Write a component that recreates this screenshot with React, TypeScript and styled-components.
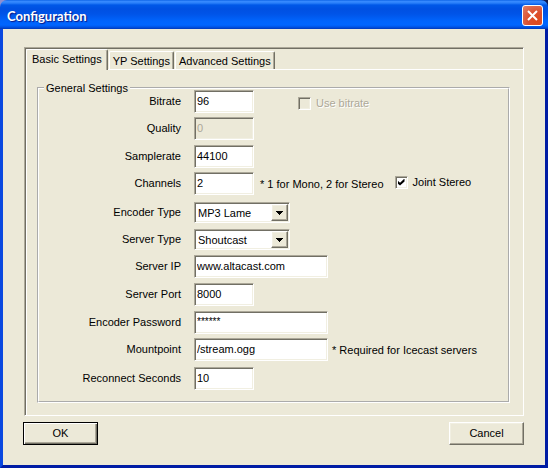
import React from "react";
import styled, { createGlobalStyle, css } from "styled-components";

const GlobalStyle = createGlobalStyle`
  * { box-sizing: border-box; }
  body {
    margin: 0;
    background: linear-gradient(90deg, #8f8fd0 50%, #101850 50%);
    color: #000;
    font: 11px/14px "Liberation Sans", Arial, sans-serif;
  }
  input, select, button { font: inherit; color: inherit; margin: 0; }
`;

const face = "#ece9d8";
const shade = "#aca899";
const dark = "#716f64";
const light = "#f1efe2";

const sunken = css`
  border: 1px solid;
  border-color: ${shade} #fff #fff ${shade};
  box-shadow: inset 1px 1px 0 ${dark}, inset -1px -1px 0 ${light};
`;

const raised = css`
  border: 1px solid;
  border-color: #fff ${dark} ${dark} #fff;
  box-shadow: inset -1px -1px 0 ${shade}, inset 1px 1px 0 ${light};
`;

const Window = styled.main`
  border-radius: 7px 7px 0 0;
  overflow: hidden;
`;

const TitleBar = styled.header`
  display: flex;
  align-items: center;
  justify-content: space-between;
  height: 29px;
  padding: 2px 5px 0 7px;
  background: linear-gradient(
    #0058e0 0, #3a8cff 1px, #2a80fa 3px, #0058e8 5px, #0050e2 9px,
    #0054e8 14px, #0064fc 21px, #0066ff 25px, #0054e6 27px, #0038b8 29px
  );
`;

const Title = styled.h1`
  margin: 0;
  color: #fff;
  font: bold 13px/18px Lato, "Noto Sans", sans-serif;
  text-shadow: 1px 1px 1px #0a1883;
`;

const CloseButton = styled.button`
  display: grid;
  place-items: center;
  width: 21px;
  height: 21px;
  padding: 0;
  border: 1px solid #fff;
  border-radius: 3px;
  background: radial-gradient(circle at 75% 80%, #e04a1c, #dc5030 45%, #e08068 100%);
`;

const Body = styled.form`
  padding: 18px 21px 20px;
  border: 3px solid;
  border-color: transparent #001ca4 #001ca4 #0a48e0;
  border-top: 0;
  background: ${face};
`;

const TabControl = styled.section`
  border: 1px solid;
  border-color: ${shade} #fff #fff ${shade};
  box-shadow: inset 1px 1px 0 ${dark};
  padding: 1px 0 0 1px;
`;

const TabList = styled.div`
  display: flex;
  align-items: flex-end;
  gap: 1px;
  height: 20px;
`;

const Tab = styled.button<{ $active?: boolean }>`
  height: ${(p) => (p.$active ? 20 : 18)}px;
  padding: ${(p) => (p.$active ? "0 5px 2px" : "0 3px")};
  border: 1px solid;
  border-color: #fff ${dark} transparent #fff;
  border-bottom: 0;
  border-radius: 2px 2px 0 0;
  box-shadow: inset -1px 0 0 ${shade};
  background: ${face};
  white-space: nowrap;
  ${(p) => p.$active && "margin-bottom: -1px; height: 21px;"}
`;

const TabPanel = styled.div`
  padding: 11px 13px 12px 10px;
  border-top: 1px solid #fff;
  border-left: 1px solid #fff;
`;

const Group = styled.fieldset`
  min-width: 0;
  margin: 0;
  padding: 0 0 11px;
  border: 2px groove #fff;
`;

const Legend = styled.legend`
  margin-left: 5px;
  padding: 0 2px;
`;

const Rows = styled.div`
  display: grid;
  grid-template-rows: 27px 28px 27px 30px 27px 26px 28px 28px 27px 29px 23px;
  align-items: start;
  margin-top: -5px;
`;

const Row = styled.div`
  display: flex;
  align-items: center;
`;

const Label = styled.label`
  width: 142px;
  margin-right: 13px;
  padding-bottom: 2px;
  text-align: right;
`;

const TextBox = styled.input<{ $wide?: boolean; $masked?: boolean }>`
  ${sunken}
  width: ${(p) => (p.$wide ? 134 : 60)}px;
  height: 23px;
  padding: 0 2px 2px;
  border-radius: 0;
  outline: 0;
  background: #fff;
  ${(p) => p.$masked && "font-size: 10px;"}
  &:disabled { background: ${face}; color: ${shade}; }
`;

const Hint = styled.span<{ $far?: boolean }>`
  margin-left: ${(p) => (p.$far ? 6 : 4)}px;
  white-space: nowrap;
`;

const Combo = styled.div`
  ${sunken}
  display: grid;
  grid-template-columns: 1fr 17px;
  width: 96px;
  height: 21px;
  padding: 1px;
  background: #fff;
`;

const Select = styled.select`
  grid-area: 1 / 1 / 2 / 3;
  appearance: none;
  padding: 0 0 0 2px;
  border: 0;
  outline: 0;
  background: transparent;
`;

const Arrow = styled.span`
  ${raised}
  grid-area: 1 / 2;
  display: grid;
  place-items: center;
  background: ${face};
  pointer-events: none;
`;

const CheckLabel = styled.label<{ $disabled?: boolean; $gap: number }>`
  display: flex;
  align-items: center;
  gap: 5px;
  margin-left: ${(p) => p.$gap}px;
  white-space: nowrap;
  ${(p) => p.$disabled ? `padding-top: 3px; color: ${shade}; text-shadow: 1px 1px 0 #fff;` : "padding-bottom: 3px;"}
`;

const CheckBox = styled.input`
  ${sunken}
  appearance: none;
  display: grid;
  place-items: center;
  width: 13px;
  height: 13px;
  background: #fff;
  &:disabled { background: ${face}; }
  &:checked::before {
    content: "";
    width: 7px;
    height: 7px;
    background: #000;
    clip-path: polygon(0 28%, 36% 60%, 100% 0, 100% 42%, 36% 100%, 0 70%);
  }
`;

const Actions = styled.footer`
  display: flex;
  justify-content: space-between;
  margin: 6px 0 0 -1px;
`;

const Button = styled.button<{ $default?: boolean }>`
  ${raised}
  width: 75px;
  height: 23px;
  padding: 0 0 2px;
  background: ${face};
  ${(p) =>
    p.$default &&
    css`
      border-color: #000;
      box-shadow: inset 1px 1px 0 #fff, inset -1px -1px 0 ${dark}, inset -2px -2px 0 ${shade};
    `}
`;

const ArrowIcon = () => (
  <svg width="7" height="4" viewBox="0 0 7 4" shapeRendering="crispEdges" aria-hidden="true">
    <path d="M0 0h7v1h-1v1h-1v1h-1v1h-1v-1h-1v-1h-1v-1h-1z" />
  </svg>
);

type FieldProps = {
  id: string;
  label: string;
  value: string;
  kind?: "select";
  wide?: boolean;
  masked?: boolean;
  disabled?: boolean;
  children?: React.ReactNode;
};

function Field({ id, label, value, kind, wide, masked, disabled, children }: FieldProps) {
  return (
    <Row>
      <Label htmlFor={id}>{label}</Label>
      {kind === "select" ? (
        <Combo>
          <Select id={id} defaultValue={value}>
            <option>{value}</option>
          </Select>
          <Arrow><ArrowIcon /></Arrow>
        </Combo>
      ) : (
        <TextBox id={id} defaultValue={value} $wide={wide} $masked={masked} disabled={disabled} autoComplete="off" />
      )}
      {children}
    </Row>
  );
}

export default function App() {
  return (
    <>
      <GlobalStyle />
      <Window>
        <TitleBar>
          <Title>Configuration</Title>
          <CloseButton type="button" aria-label="Close">
            <svg width="11" height="11" viewBox="0 0 11 11" aria-hidden="true">
              <path d="M1 1L10 10M10 1L1 10" stroke="#fff" strokeWidth="2" />
            </svg>
          </CloseButton>
        </TitleBar>
        <Body onSubmit={(e) => e.preventDefault()}>
          <TabControl>
            <TabList role="tablist">
              <Tab type="button" role="tab" aria-selected="true" $active>Basic Settings</Tab>
              <Tab type="button" role="tab" aria-selected="false">YP Settings</Tab>
              <Tab type="button" role="tab" aria-selected="false">Advanced Settings</Tab>
            </TabList>
            <TabPanel role="tabpanel">
              <Group>
                <Legend>General Settings</Legend>
                <Rows>
                  <Field id="bitrate" label="Bitrate" value="96">
                    <CheckLabel $disabled $gap={44}>
                      <CheckBox type="checkbox" disabled />
                      Use bitrate
                    </CheckLabel>
                  </Field>
                  <Field id="quality" label="Quality" value="0" disabled />
                  <Field id="samplerate" label="Samplerate" value="44100" />
                  <Field id="channels" label="Channels" value="2">
                    <Hint $far>* 1 for Mono, 2 for Stereo</Hint>
                    <CheckLabel $gap={11}>
                      <CheckBox type="checkbox" defaultChecked />
                      Joint Stereo
                    </CheckLabel>
                  </Field>
                  <Field id="encoder" label="Encoder Type" value="MP3 Lame" kind="select" />
                  <Field id="server" label="Server Type" value="Shoutcast" kind="select" />
                  <Field id="ip" label="Server IP" value="www.altacast.com" wide />
                  <Field id="port" label="Server Port" value="8000" />
                  <Field id="password" label="Encoder Password" value="******" wide masked />
                  <Field id="mountpoint" label="Mountpoint" value="/stream.ogg" wide>
                    <Hint>* Required for Icecast servers</Hint>
                  </Field>
                  <Field id="reconnect" label="Reconnect Seconds" value="10" />
                </Rows>
              </Group>
            </TabPanel>
          </TabControl>
          <Actions>
            <Button type="submit" $default>OK</Button>
            <Button type="button">Cancel</Button>
          </Actions>
        </Body>
      </Window>
    </>
  );
}
